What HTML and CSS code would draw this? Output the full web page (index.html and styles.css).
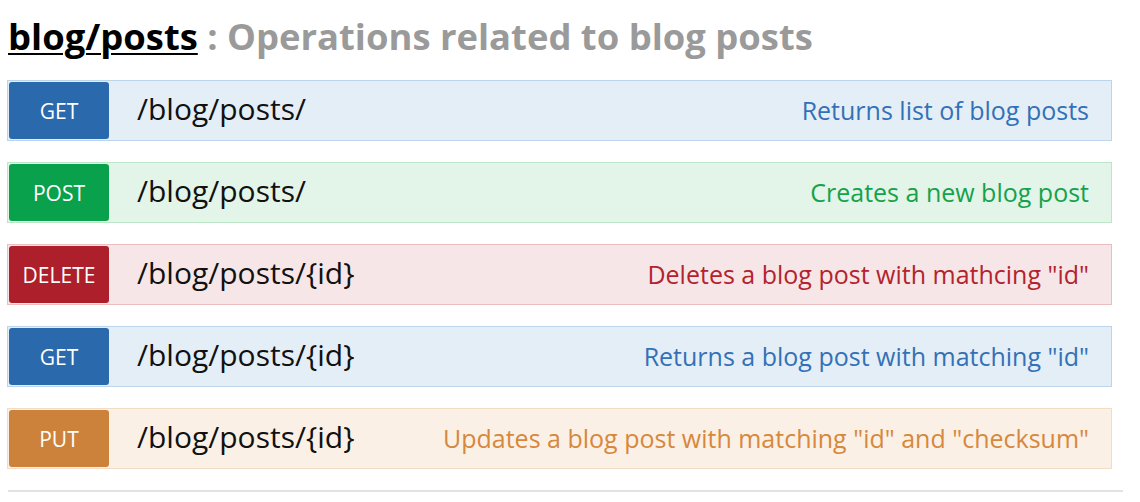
FILE: index.html
```html
<!DOCTYPE html>
<html lang="en">
<head>
<meta charset="utf-8">
<title>blog/posts</title>
<link rel="stylesheet" href="styles.css">
</head>
<body>
<div class="page">
  <h2 class="heading"><a class="tag-link" href="#">blog/posts</a><span class="tag-desc"> : Operations related to blog posts</span></h2>
  <ul class="ops">
    <li class="op op-get">
      <span class="method">GET</span>
      <span class="path">/blog/posts/</span>
      <span class="summary">Returns list of blog posts</span>
    </li>
    <li class="op op-post">
      <span class="method">POST</span>
      <span class="path">/blog/posts/</span>
      <span class="summary">Creates a new blog post</span>
    </li>
    <li class="op op-delete">
      <span class="method">DELETE</span>
      <span class="path">/blog/posts/{id}</span>
      <span class="summary">Deletes a blog post with mathcing "id"</span>
    </li>
    <li class="op op-get">
      <span class="method">GET</span>
      <span class="path">/blog/posts/{id}</span>
      <span class="summary">Returns a blog post with matching "id"</span>
    </li>
    <li class="op op-put">
      <span class="method">PUT</span>
      <span class="path">/blog/posts/{id}</span>
      <span class="summary">Updates a blog post with matching "id" and "checksum"</span>
    </li>
  </ul>
  <div class="rule"></div>
</div>
</body>
</html>
```

FILE: styles.css
```css
html, body {
  margin: 0;
  padding: 0;
  background: #ffffff;
}

body {
  font-family: "Open Sans", "Noto Sans", "DejaVu Sans", sans-serif;
  color: #111;
}

.page {
  padding: 14px 0 0 7px;
  width: 1116px;
}

.heading {
  margin: 0 0 22px 1px;
  font-size: 36.4px;
  line-height: 44px;
  font-weight: 700;
  white-space: nowrap;
}

.tag-link {
  color: #000;
  text-decoration: underline;
  text-decoration-thickness: 2px;
  text-underline-offset: 3px;
}

.tag-desc {
  color: #9a9a9a;
}

.ops {
  list-style: none;
  margin: 0;
  padding: 0;
  display: flex;
  flex-direction: column;
  gap: 21px;
}

.op {
  display: flex;
  align-items: center;
  width: 1105px;
  height: 61px;
  box-sizing: border-box;
  border: 1px solid;
  padding: 1px;
}

.method {
  flex: 0 0 100px;
  height: 57px;
  border-radius: 3px;
  color: #fff;
  font-size: 21px;
  display: flex;
  align-items: center;
  justify-content: center;
}

.path {
  margin-left: 28px;
  font-size: 30px;
  color: #111;
  position: relative;
  top: -2px;
}

.summary {
  margin-left: auto;
  padding-right: 21px;
  font-size: 25px;
  position: relative;
  top: -1px;
}

.op-get { background: #e4eef7; border-color: #bcd5ec; }
.op-get .method { background: #2b69ad; }
.op-get .summary { color: #3371b6; }

.op-post { background: #e3f4e9; border-color: #bde5c8; }
.op-post .method { background: #0aa14c; }
.op-post .summary { color: #16a24a; }

.op-delete { background: #f7e6e7; border-color: #ebbcc0; }
.op-delete .method { background: #ad1f2b; }
.op-delete .summary { color: #b2232e; }

.op-put { background: #fbf0e6; border-color: #f3dcc6; }
.op-put .method { background: #cd823b; }
.op-put .summary { color: #d6883c; }

.rule {
  margin: 21px 0 0 1px;
  width: 1115px;
  height: 2px;
  background: #e2e2e2;
}
```
